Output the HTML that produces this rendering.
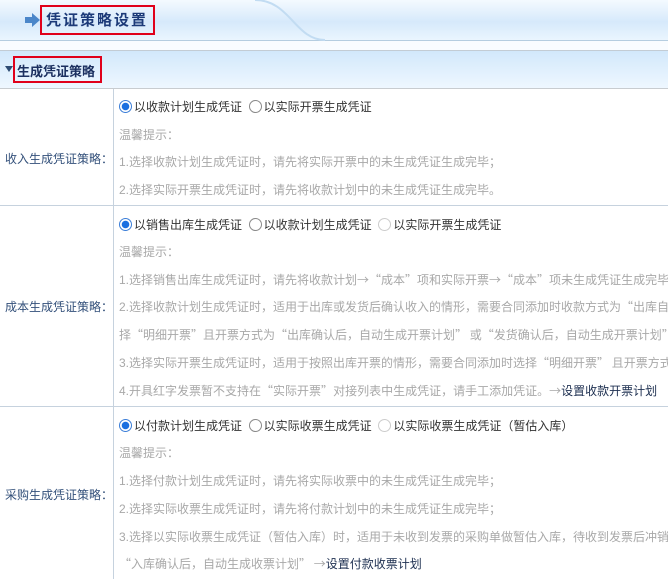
<!DOCTYPE html>
<html><head><meta charset="utf-8"><style>
*{margin:0;padding:0;box-sizing:border-box}
body{width:668px;height:572px;overflow:hidden;background:#fff;font-family:"Liberation Sans","Noto Sans CJK SC","WenQuanYi Zen Hei",sans-serif;font-size:12px;position:relative}
.hdr{position:absolute;left:0;top:0;width:668px;height:41px;background:linear-gradient(#f4faff,#d6e9fb 55%,#eaf5fe);border-bottom:1px solid #b5cde0}
.band{position:absolute;left:0;top:41px;width:668px;height:10px;background:#f9fcff;border-bottom:1px solid #c3ccd4}
.sec{position:absolute;left:0;top:51px;width:668px;height:38px;background:linear-gradient(#d2e8fb,#eef7ff);border-bottom:1px solid #c8ccd0}
.box{position:absolute;border:2px solid #e0001a}
.t{position:absolute;white-space:nowrap}
.cj{font-family:"Noto Sans CJK SC","WenQuanYi Zen Hei",sans-serif}
.lab{position:absolute;left:0;width:113px;text-align:right;color:#33507a;font-size:12px;white-space:nowrap}
.vl{position:absolute;left:113px;top:89px;width:1px;height:490px;background:#c6d2de}
.hl{position:absolute;left:0;width:668px;height:1px;background:#c6d2de}
.g{color:#a8a8a8}
.o{color:#333}
.r{display:inline-block;width:13px;height:13px;border-radius:50%;border:1px solid #8a8a8a;background:#fff;vertical-align:-2px;margin-right:2px;position:relative}
.r.on{border-color:#3b7ed8;background:radial-gradient(#1a6fe0 0 3.5px,#fff 4px)}
.r.dis{border-color:#ccc}
</style></head><body>
<div class="hdr"></div>
<svg style="position:absolute;left:255px;top:0" width="70" height="41"><path d="M0 0 C35 0 40 40 70 40" fill="none" stroke="#c2dcf2" stroke-width="2"/></svg>
<svg style="position:absolute;left:25px;top:13px" width="16" height="14"><path d="M0 4h7V0l8 7-8 7v-4H0z" fill="#4b86c9"/></svg>
<div class="t" style="left:46px;top:9px;font-size:15px;font-weight:bold;color:#1c3a78;letter-spacing:2px">凭证策略设置</div>
<div class="box" style="left:40px;top:5px;width:115px;height:30px"></div>
<div class="band"></div>
<div class="sec"></div>
<svg style="position:absolute;left:5px;top:66px" width="8" height="6"><path d="M0 0h8L4 6z" fill="#2d4b73"/></svg>
<div class="t" style="left:17px;top:61px;font-weight:bold;color:#1c3060;font-size:13px">生成凭证策略</div>
<div class="box" style="left:13px;top:56px;width:89px;height:27px"></div>
<div class="vl"></div>
<div class="hl" style="top:205px"></div>
<div class="hl" style="top:406px"></div>

<div class="lab" style="top:150px">收入生成凭证策略：</div>
<div class="t o" style="left:119px;top:98px"><span class="r on"></span>以收款计划生成凭证 &nbsp;<span class="r"></span>以实际开票生成凭证</div>
<div class="t g" style="left:119px;top:126px">温馨提示：</div>
<div class="t g" style="left:119px;top:153px">1.选择收款计划生成凭证时，请先将实际开票中的未生成凭证生成完毕；</div>
<div class="t g" style="left:119px;top:181px">2.选择实际开票生成凭证时，请先将收款计划中的未生成凭证生成完毕。</div>

<div class="lab" style="top:298px">成本生成凭证策略：</div>
<div class="t o" style="left:119px;top:216px"><span class="r on"></span>以销售出库生成凭证 &nbsp;<span class="r"></span>以收款计划生成凭证 &nbsp;<span class="r dis"></span>以实际开票生成凭证</div>
<div class="t g" style="left:119px;top:243px">温馨提示：</div>
<div class="t g" style="left:119px;top:271px">1.选择销售出库生成凭证时，请先将收款计划<span class="cj">→“成本”</span>项和实际开票<span class="cj">→“成本”</span>项未生成凭证生成完毕；</div>
<div class="t g" style="left:119px;top:298px">2.选择收款计划生成凭证时，适用于出库或发货后确认收入的情形，需要合同添加时收款方式为<span class="cj">“</span>出库自动</div>
<div class="t g" style="left:119px;top:326px"><span class="cj">择“明细开票”</span>且开票方式为<span class="cj">“</span>出库确认后，自动生成开票计划<span class="cj">” </span>或<span class="cj">“</span>发货确认后，自动生成开票计划<span class="cj">”</span></div>
<div class="t g" style="left:119px;top:354px">3.选择实际开票生成凭证时，适用于按照出库开票的情形，需要合同添加时选择<span class="cj">“</span>明细开票<span class="cj">” </span>且开票方式为</div>
<div class="t g" style="left:119px;top:382px">4.开具红字发票暂不支持在<span class="cj">“</span>实际开票<span class="cj">”</span>对接列表中生成凭证，请手工添加凭证。<span class="cj">→</span><span style="color:#1d2f50">设置收款开票计划</span></div>

<div class="lab" style="top:486px">采购生成凭证策略：</div>
<div class="t o" style="left:119px;top:417px"><span class="r on"></span>以付款计划生成凭证 &nbsp;<span class="r"></span>以实际收票生成凭证 &nbsp;<span class="r dis"></span>以实际收票生成凭证（暂估入库）</div>
<div class="t g" style="left:119px;top:444px">温馨提示：</div>
<div class="t g" style="left:119px;top:472px">1.选择付款计划生成凭证时，请先将实际收票中的未生成凭证生成完毕；</div>
<div class="t g" style="left:119px;top:500px">2.选择实际收票生成凭证时，请先将付款计划中的未生成凭证生成完毕；</div>
<div class="t g" style="left:119px;top:528px">3.选择以实际收票生成凭证（暂估入库）时，适用于未收到发票的采购单做暂估入库，待收到发票后冲销</div>
<div class="t g" style="left:119px;top:555px"><span class="cj">“</span>入库确认后，自动生成收票计划<span class="cj">” →</span><span style="color:#1d2f50">设置付款收票计划</span></div>
</body></html>
